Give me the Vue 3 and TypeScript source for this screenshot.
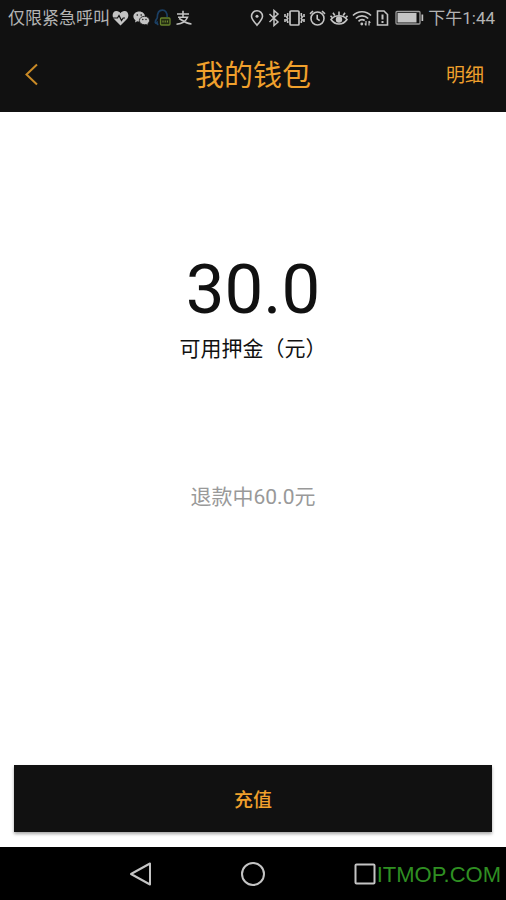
<script setup lang="ts">
import { ref } from 'vue'

const carrier = ref<string>('仅限紧急呼叫')
const clock = ref<string>('下午1:44')
const deposit = ref<number>(30)
const refunding = ref<number>(60)

const money = (value: number): string => value.toFixed(1)
</script>

<template>
  <div class="screen">
    <div class="status">
      <span class="carrier">{{ carrier }}</span>
      <div class="notices">
        <svg width="17" height="18" viewBox="0 0 17 18" aria-hidden="true">
          <path d="M8.500 16.500L2 10C-.5 7 .5 2 4.500 2c2 0 3.200 1 4 2.200C9.300 3 10.500 2 12.500 2c4 0 5 5 2.500 8z" fill="#c4c4c4" />
          <path d="M1 9h4.500l1.500-2.500 2.500 5L11.200 9H13" fill="none" stroke="#111" stroke-width="1.200" />
        </svg>
        <svg width="17" height="18" viewBox="0 0 17 18" aria-hidden="true">
          <path d="M6.200 2.500c3.300 0 5.800 2.200 5.800 5s-2.500 5-5.800 5c-.7 0-1.300-.1-1.900-.2L2 13.500l.5-2.200C1.200 10.400.4 9 .4 7.500c0-2.800 2.500-5 5.800-5z" fill="#c4c4c4" />
          <path d="M11.500 7.300c3 0 5 1.900 5 4.200 0 1.300-.7 2.400-1.700 3.200l.3 1.800-1.900-1c-.5.100-1.100.2-1.700.2-3 0-5.100-1.900-5.100-4.200s2.100-4.200 5.100-4.200z" fill="#c4c4c4" stroke="#111" stroke-width=".8" />
          <g fill="#111"><circle cx="4.300" cy="6" r=".8" /><circle cx="8.200" cy="6" r=".8" /><circle cx="9.800" cy="10.500" r=".7" /><circle cx="13" cy="10.500" r=".7" /></g>
        </svg>
        <svg width="17" height="18" viewBox="0 0 17 18" aria-hidden="true">
          <path d="M4.500 15.500c-1.200 0-1.500-.8-1.500-2-1.200 1-2 .5-1.700-.8.300-1.500 1.500-2.700 2-4C3.300 4 5 1.200 8.300 1.200S13.200 4 13.200 8" fill="none" stroke="#1b3f63" stroke-width="1.700" />
          <rect x="6.500" y="9" width="9.500" height="7" rx="1" fill="#222b12" stroke="#66812b" stroke-width="1.300" />
          <path d="M9 11.500v2M11.200 11.500v2M13.400 11.500v2" stroke="#7d9638" stroke-width="1" />
        </svg>
        <svg width="17" height="18" viewBox="0 0 17 18" fill="none" stroke="#c4c4c4" stroke-width="1.600" aria-hidden="true">
          <path d="M2 5h12M8 1.800v6.400M3 8.200h9.500c-1.500 3.800-5.500 6.500-11 7M4 9.500c3 1.500 6.500 5 12.500 5.500" />
        </svg>
      </div>
      <div class="system">
        <svg width="14" height="18" viewBox="0 0 14 18" fill="none" stroke="#c4c4c4" stroke-width="1.600" aria-hidden="true">
          <path d="M7 16.200C4 12.800 1.500 10 1.500 7.200a5.500 5.500 0 0 1 11 0C12.500 10 10 12.800 7 16.200z" />
          <circle cx="7" cy="7.200" r="1.500" fill="#c4c4c4" stroke="none" />
        </svg>
        <svg width="12" height="18" viewBox="0 0 12 18" fill="none" stroke="#c4c4c4" stroke-width="1.500" aria-hidden="true">
          <path d="M1.500 5l8.500 8-4 3.500v-15L10 5l-8.500 8" />
        </svg>
        <svg width="21" height="18" viewBox="0 0 21 18" fill="none" stroke="#c4c4c4" stroke-width="1.700" aria-hidden="true">
          <rect x="6" y="2" width="9" height="14" rx="1" />
          <path d="M3.700 4v2.500l-1 1.500 1 1.500-1 1.500 1 1.500V14M1 5v3M1 10v3M17.300 4v2.500l1 1.500-1 1.500 1 1.500-1 1.500V14M20 5v3M20 10v3" stroke-width="1.600" />
        </svg>
        <svg width="17" height="18" viewBox="0 0 17 18" fill="none" stroke="#c4c4c4" stroke-width="1.600" aria-hidden="true">
          <circle cx="8.500" cy="9.500" r="6.500" />
          <path d="M8.200 5.800v4l2.500 1.800M1 4.800L4 2M16 4.800L13 2" />
        </svg>
        <svg width="18" height="18" viewBox="0 0 18 18" fill="none" stroke="#c4c4c4" stroke-width="1.600" aria-hidden="true">
          <path d="M1 10.500c4-5 12-5 16 0-4 6-12 6-16 0z" />
          <circle cx="9" cy="10.500" r="3.200" fill="#c4c4c4" stroke="none" />
          <path d="M9 6V2.500M4.800 6.500L3 3.800M13.200 6.500L15 3.800M2.200 8.500L.5 6.800M15.800 8.500l1.700-1.700" />
        </svg>
        <svg width="20" height="18" viewBox="0 0 20 18" fill="none" stroke="#c4c4c4" stroke-width="1.700" aria-hidden="true">
          <path d="M1 6.500c5-5 13-5 18 0M3.800 9.500c3.600-3.500 8.800-3.500 12.400 0M6.500 12.300c2-2 4.500-2 6.200-.8" />
          <circle cx="9.800" cy="15" r="1.400" fill="#c4c4c4" stroke="none" />
          <path d="M14 12v4.500M17 12v4.500M12.800 14.500L14 16.300M17 12l1.300 1.800" stroke-width="1.200" />
        </svg>
        <svg width="13" height="18" viewBox="0 0 13 18" fill="none" stroke="#c4c4c4" stroke-width="1.600" aria-hidden="true">
          <path d="M1.500 2h6.500l3.500 3.500V16h-10z" />
          <path d="M6.500 5.500v5M6.500 12v2" stroke-width="2" />
        </svg>
        <svg class="battery" width="29" height="18" viewBox="0 0 29 18" aria-hidden="true">
          <rect x="1" y="2.500" width="24" height="12.500" rx="1" fill="none" stroke="#9c9c9c" stroke-width="1.300" />
          <rect x="2.500" y="4" width="19" height="9.500" fill="#c4c4c4" />
          <rect x="26.500" y="5.500" width="1.700" height="6.500" fill="#c4c4c4" />
        </svg>
        <span class="clock">{{ clock }}</span>
      </div>
    </div>

    <header class="header">
      <button class="back" type="button" aria-label="返回">
        <svg width="14" height="24" viewBox="0 0 14 24" fill="none" stroke="#c98a26" stroke-width="2" aria-hidden="true">
          <path d="M12 1.500L1.500 11.500 12 21.500" />
        </svg>
      </button>
      <h1 class="title">我的钱包</h1>
      <a class="detail" href="#">明细</a>
    </header>

    <main class="content">
      <p class="amount">{{ money(deposit) }}</p>
      <p class="label">可用押金（元）</p>
      <p class="refund">退款中{{ money(refunding) }}元</p>
      <button class="recharge" type="button">充值</button>
    </main>

    <nav class="nav">
      <button type="button" aria-label="后退">
        <svg width="24" height="26" viewBox="0 0 24 26" aria-hidden="true">
          <path d="M21 2.500v21L2 13z" />
        </svg>
      </button>
      <button type="button" aria-label="主屏幕">
        <svg width="24" height="26" viewBox="0 0 24 26" aria-hidden="true">
          <circle cx="12" cy="13" r="11" />
        </svg>
      </button>
      <button type="button" aria-label="最近任务">
        <svg width="24" height="26" viewBox="0 0 24 26" aria-hidden="true">
          <rect x="2.500" y="3.500" width="19" height="19" rx="1" />
        </svg>
      </button>
      <span class="watermark">ITMOP.COM</span>
    </nav>
  </div>
</template>

<style>
body {
  margin: 0;
  background: #fff;
}
</style>

<style scoped>
.screen {
  display: flex;
  flex-direction: column;
  min-height: 100vh;
  font-family: Roboto, "Noto Sans CJK SC", sans-serif;
  color: #111;
}

svg {
  display: block;
  flex: none;
}

button {
  padding: 0;
  border: 0;
  background: none;
  font-family: inherit;
  cursor: pointer;
}

.status {
  display: flex;
  align-items: center;
  height: 36px;
  padding: 0 11px 0 8px;
  background: #111;
  color: #b4b4b4;
  font-size: 17px;
  line-height: 24px;
  white-space: nowrap;
}

.notices {
  display: flex;
  gap: 4px;
  margin-left: 2px;
}

.system {
  display: flex;
  align-items: center;
  gap: 4px;
  margin-left: auto;
}

.battery {
  margin-left: 2px;
}

.header {
  display: grid;
  grid-template-columns: 1fr auto 1fr;
  align-items: center;
  box-sizing: border-box;
  height: 76px;
  padding: 3px 22px 0;
  background: #111;
  color: #f0a02c;
}

.back {
  justify-self: start;
  padding: 0 3px 2px;
}

.title {
  margin: 0;
  font-size: 29px;
  font-weight: 400;
  line-height: 40px;
}

.detail {
  justify-self: end;
  color: inherit;
  font-size: 19px;
  line-height: 28px;
  text-decoration: none;
}

.content {
  display: flex;
  flex: 1;
  flex-direction: column;
  padding: 140px 14px 15px;
  text-align: center;
}

.content p {
  margin: 0;
}

.amount {
  font-size: 69px;
  line-height: 76px;
}

.content .label {
  margin-top: 5px;
  font-size: 21px;
  line-height: 32px;
}

.content .refund {
  margin-top: 116px;
  color: #999;
  font-size: 21px;
  line-height: 32px;
}

.recharge {
  height: 67px;
  margin-top: auto;
  background: #111;
  box-shadow: 0 2px 3px rgba(0, 0, 0, 0.35);
  color: #f0a02c;
  font-size: 19px;
  font-weight: 500;
}

.nav {
  position: relative;
  display: flex;
  align-items: center;
  justify-content: center;
  gap: 88px;
  height: 53px;
  background: #000;
}

.nav svg {
  fill: none;
  stroke: #c4c4c4;
  stroke-width: 2;
  stroke-linejoin: round;
}

.watermark {
  position: absolute;
  right: 5px;
  bottom: 11px;
  color: #2f8f22;
  font-family: "Liberation Sans", Arial, sans-serif;
  font-size: 22px;
  line-height: 28px;
}
</style>
